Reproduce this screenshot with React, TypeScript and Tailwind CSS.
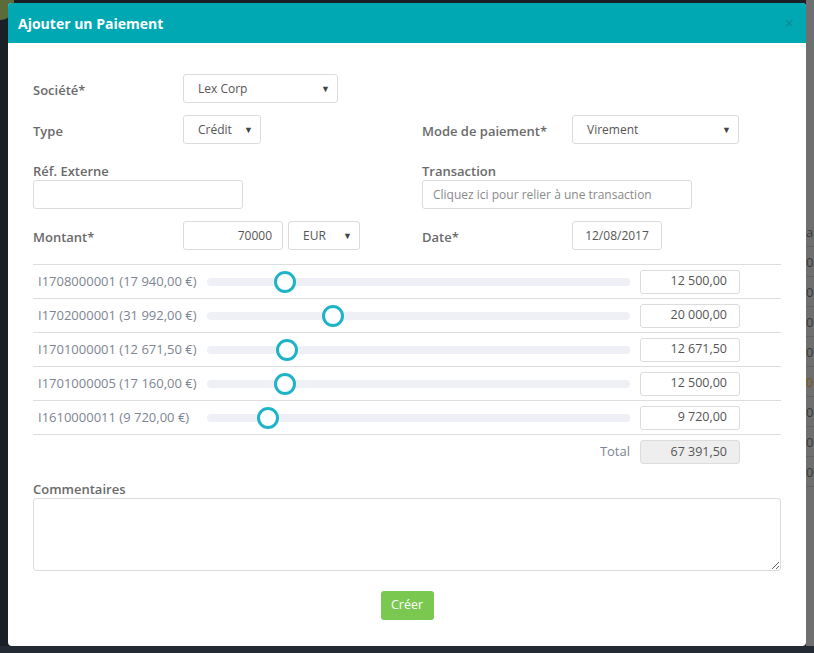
import React from "react";

interface Allocation {
  ref: string;
  due: string;
  amount: number;
}

const allocations: Allocation[] = [
  { ref: "I1708000001", due: "17 940,00 €", amount: 12500 },
  { ref: "I1702000001", due: "31 992,00 €", amount: 20000 },
  { ref: "I1701000001", due: "12 671,50 €", amount: 12671.5 },
  { ref: "I1701000005", due: "17 160,00 €", amount: 12500 },
  { ref: "I1610000011", due: "9 720,00 €", amount: 9720 },
];

function formatAmount(n: number): string {
  const [int, dec] = n.toFixed(2).split(".");
  return `${int.replace(/\B(?=(\d{3})+(?!\d))/g, " ")},${dec}`;
}

function Label({ children }: { children: React.ReactNode }) {
  return (
    <span className="text-[13px] font-semibold text-[#6a6a6a]">{children}</span>
  );
}

function FakeSelect({ value, width }: { value: string; width: string }) {
  return (
    <div
      className={`flex h-[29px] ${width} items-center justify-between rounded-[3px] border border-[#dcdcdc] bg-white pl-[14px] pr-[7px] pt-[1px] text-[12px] text-[#555]`}
    >
      <span>{value}</span>
      <span className="text-[9px] text-[#444]">▼</span>
    </div>
  );
}

const backdropRows = ["ar", "0,", "0,", "00", "0 €", "00", "00", "00", "00"];

export default function App() {
  const total = allocations.reduce((s, a) => s + a.amount, 0);

  return (
    <div className="relative h-[653px] w-[814px] overflow-hidden bg-[#1a2028] font-['Open_Sans',sans-serif]">
      {/* dimmed page behind the modal */}
      <div className="absolute right-0 top-0 h-[646px] w-[8px] overflow-hidden bg-[#6f6f6f]">
        <div className="mt-[217px] flex flex-col">
          {backdropRows.map((t, i) => (
            <div
              key={i}
              className={`h-[30px] whitespace-nowrap border-b border-[#636363] text-[13px] leading-[30px] ${
                i === 5 ? "text-[#7a5a1a]" : "text-[#3a3a3a]"
              }`}
            >
              {t}
            </div>
          ))}
        </div>
      </div>
      <div className="absolute left-0 top-0 h-[20px] w-[14px] rounded-br-full bg-[#5b6b3a]" />
      <div className="absolute bottom-0 left-0 h-[7px] w-full bg-[#232a34]" />

      <div className="relative ml-[8px] mt-[3px] h-[643px] w-[798px] overflow-hidden rounded-[4px] bg-white">
        <div className="flex h-[40px] items-center justify-between bg-[#00a8b3] pl-[10px] pr-[12px]">
          <h1 className="text-[14px] font-bold text-white">Ajouter un Paiement</h1>
          <span className="text-[16px] leading-none text-[#0b8c95]">×</span>
        </div>

        <div className="pl-[25px] pr-[25px] pt-[31px]">
          {/* Société */}
          <div className="grid grid-cols-[389px_1fr]">
            <div className="flex items-center">
              <div className="w-[150px]">
                <Label>Société*</Label>
              </div>
              <FakeSelect value="Lex Corp" width="w-[155px]" />
            </div>
          </div>

          {/* Type / Mode de paiement */}
          <div className="mt-[12px] grid grid-cols-[389px_1fr]">
            <div className="flex items-center">
              <div className="w-[150px]">
                <Label>Type</Label>
              </div>
              <FakeSelect value="Crédit" width="w-[78px]" />
            </div>
            <div className="flex items-center">
              <div className="w-[150px]">
                <Label>Mode de paiement*</Label>
              </div>
              <FakeSelect value="Virement" width="w-[167px]" />
            </div>
          </div>

          {/* Réf. Externe / Transaction */}
          <div className="mt-[17px] grid grid-cols-[389px_1fr]">
            <div className="flex flex-col">
              <span className="leading-[18px]">
                <Label>Réf. Externe</Label>
              </span>
              <div className="h-[29px] w-[210px] rounded-[3px] border border-[#dcdcdc]" />
            </div>
            <div className="flex flex-col">
              <span className="leading-[18px]">
                <Label>Transaction</Label>
              </span>
              <div className="flex h-[29px] w-[270px] items-center rounded-[3px] border border-[#dcdcdc] pl-[10px] text-[12px] text-[#8a8a8a]">
                Cliquez ici pour relier à une transaction
              </div>
            </div>
          </div>

          {/* Montant / Date */}
          <div className="mt-[12px] grid grid-cols-[389px_1fr]">
            <div className="flex items-center">
              <div className="w-[150px]">
                <Label>Montant*</Label>
              </div>
              <div className="flex h-[29px] w-[100px] items-center justify-end rounded-[3px] border border-[#dcdcdc] pr-[10px] text-[12px] text-[#555]">
                70000
              </div>
              <div className="ml-[5px]">
                <FakeSelect value="EUR" width="w-[72px]" />
              </div>
            </div>
            <div className="flex items-center">
              <div className="w-[150px]">
                <Label>Date*</Label>
              </div>
              <div className="flex h-[29px] w-[90px] items-center justify-center rounded-[3px] border border-[#dcdcdc] text-[12px] text-[#555]">
                12/08/2017
              </div>
            </div>
          </div>

          {/* Allocations */}
          <div className="mt-[14px] border-t border-[#dedede]">
            {allocations.map((a) => {
              const pct = (a.amount / total) * 100;
              return (
                <div
                  key={a.ref}
                  className="flex h-[34px] items-center border-b border-[#dedede]"
                >
                  <span className="w-[174px] whitespace-nowrap pl-[5px] text-[13px] text-[#7d8591]">
                    {a.ref} ({a.due})
                  </span>
                  <div className="relative h-[8px] w-[423px] rounded-full bg-[#eef0f5]">
                    <div
                      className="absolute top-1/2 h-[22px] w-[22px] -translate-x-1/2 -translate-y-1/2 rounded-full border-[3px] border-[#1eb3c6] bg-white"
                      style={{ left: `${pct}%` }}
                    />
                  </div>
                  <div className="ml-[10px] flex h-[24px] w-[100px] items-center justify-end rounded-[3px] border border-[#dcdcdc] pr-[12px] text-[12.5px] text-[#555]">
                    {formatAmount(a.amount)}
                  </div>
                </div>
              );
            })}
            <div className="flex h-[34px] items-center">
              <span className="w-[597px] text-right text-[13px] text-[#7d8591]">
                Total
              </span>
              <div className="ml-[10px] flex h-[24px] w-[100px] items-center justify-end rounded-[3px] border border-[#dcdcdc] bg-[#eeeeee] pr-[12px] text-[12.5px] text-[#555]">
                {formatAmount(total)}
              </div>
            </div>
          </div>

          {/* Commentaires */}
          <div className="mt-[10px] flex flex-col">
            <span className="leading-[18px]">
              <Label>Commentaires</Label>
            </span>
            <textarea
              className="h-[73px] w-full resize-y rounded-[3px] border border-[#dcdcdc] outline-none"
              readOnly
            />
          </div>

          <div className="mt-[20px] flex justify-center">
            <button
              type="button"
              className="h-[29px] w-[53px] rounded-[3px] bg-[#7ac84f] text-[12.5px] text-white"
            >
              Créer
            </button>
          </div>
        </div>
      </div>
    </div>
  );
}
